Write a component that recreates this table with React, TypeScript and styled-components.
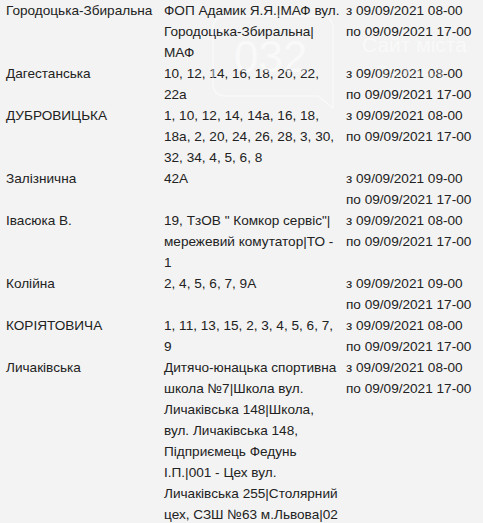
import React from 'react'
import styled, { createGlobalStyle } from 'styled-components'

const GlobalStyle = createGlobalStyle`
  html, body {
    margin: 0;
    padding: 0;
    overflow: hidden;
    background: #f3f3f3;
  }
`

const Page = styled.div`
  position: relative;
  padding: 0 0 0 2px;
  font-family: 'Liberation Sans', Arial, sans-serif;
  font-size: 13.6px;
  line-height: 21px;
  color: #222;
`

const Table = styled.div`
  display: grid;
  grid-template-columns: 158px 182px 1fr;
`

const Cell = styled.div`
  padding: 0 0 0 4px;
  overflow-wrap: break-word;
`

const Watermark = styled.svg`
  position: absolute;
  left: 0;
  top: 0;
  pointer-events: none;
`

interface Row {
  street: string
  houses: string
  from: string
  to: string
}

const rows: Row[] = [
  {
    street: 'Городоцька-Збиральна',
    houses: 'ФОП Адамик Я.Я.|МАФ вул. Городоцька-Збиральна| МАФ',
    from: 'з 09/09/2021 08-00',
    to: 'по 09/09/2021 17-00',
  },
  {
    street: 'Дагестанська',
    houses: '10, 12, 14, 16, 18, 20, 22, 22а',
    from: 'з 09/09/2021 08-00',
    to: 'по 09/09/2021 17-00',
  },
  {
    street: 'ДУБРОВИЦЬКА',
    houses: '1, 10, 12, 14, 14а, 16, 18, 18а, 2, 20, 24, 26, 28, 3, 30, 32, 34, 4, 5, 6, 8',
    from: 'з 09/09/2021 08-00',
    to: 'по 09/09/2021 17-00',
  },
  {
    street: 'Залізнична',
    houses: '42А',
    from: 'з 09/09/2021 09-00',
    to: 'по 09/09/2021 17-00',
  },
  {
    street: 'Івасюка В.',
    houses: '19, ТзОВ " Комкор сервіс"| мережевий комутатор|ТО - 1',
    from: 'з 09/09/2021 08-00',
    to: 'по 09/09/2021 17-00',
  },
  {
    street: 'Колійна',
    houses: '2, 4, 5, 6, 7, 9А',
    from: 'з 09/09/2021 09-00',
    to: 'по 09/09/2021 17-00',
  },
  {
    street: 'КОРІЯТОВИЧА',
    houses: '1, 11, 13, 15, 2, 3, 4, 5, 6, 7, 9',
    from: 'з 09/09/2021 08-00',
    to: 'по 09/09/2021 17-00',
  },
  {
    street: 'Личаківська',
    houses:
      'Дитячо-юнацька спортивна школа №7|Школа вул. Личаківська 148|Школа, вул. Личаківська 148, Підприємець Федунь І.П.|001 - Цех вул. Личаківська 255|Столярний цех, СЗШ №63 м.Львова|02 - Школа вул. Личаківська',
    from: 'з 09/09/2021 08-00',
    to: 'по 09/09/2021 17-00',
  },
]

export default function App() {
  return (
    <Page>
      <GlobalStyle />
      <Table>
        {rows.map((r) => (
          <React.Fragment key={r.street}>
            <Cell>{r.street}</Cell>
            <Cell>{r.houses}</Cell>
            <Cell>
              {r.from}
              <br />
              {r.to}
            </Cell>
          </React.Fragment>
        ))}
      </Table>
      {/* faint site watermark */}
      <Watermark width='483' height='120' viewBox='0 0 483 120'>
        <path
          d='M226 16 H320 Q333 16 333 29 V90 L333 108 L318 96 H226 Q213 96 213 83 V29 Q213 16 226 16 Z'
          fill='none'
          stroke='#fff'
          strokeWidth='1.5'
          opacity='0.5'
        />
        <text x='234' y='72' fill='#fff' opacity='0.5' fontFamily='Liberation Sans, sans-serif' fontSize='44'>
          032
        </text>
        <text x='362' y='52' fill='#fff' opacity='0.5' fontFamily='Liberation Sans, sans-serif' fontSize='21'>
          Сайт міста
        </text>
        <text x='374' y='80' fill='#fff' opacity='0.3' fontFamily='Liberation Sans, sans-serif' fontSize='21'>
          Львова
        </text>
      </Watermark>
    </Page>
  )
}
